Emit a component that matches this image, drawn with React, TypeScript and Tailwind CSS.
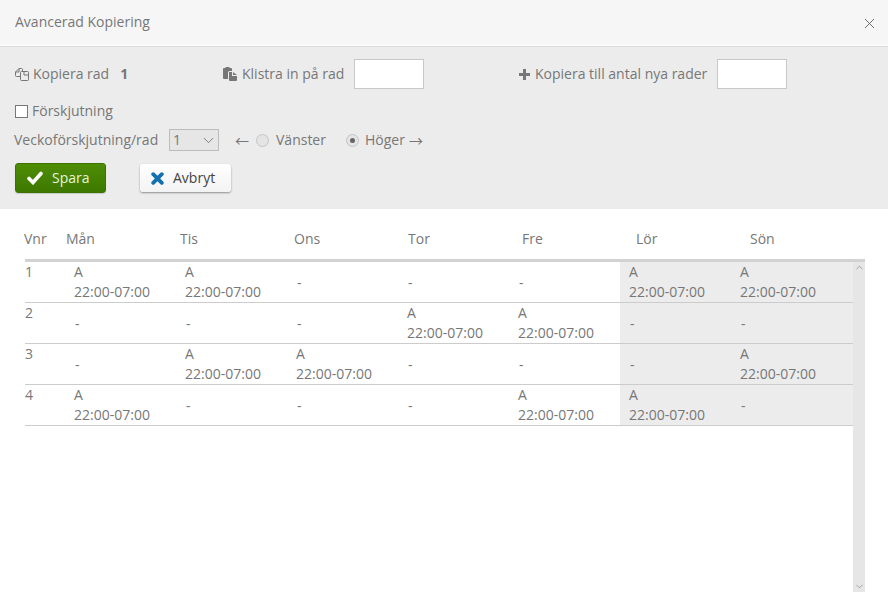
import React from "react";
import { ChevronDown, ChevronUp, X } from "lucide-react";

type Cell = boolean;
const rows: { n: number; cells: Cell[] }[] = [
  { n: 1, cells: [true, true, false, false, false, true, true] },
  { n: 2, cells: [false, false, false, true, true, false, false] },
  { n: 3, cells: [false, true, true, false, false, false, true] },
  { n: 4, cells: [true, false, false, false, true, true, false] },
];
const days = ["Mån", "Tis", "Ons", "Tor", "Fre", "Lör", "Sön"];

function CopyIcon() {
  return (
    <svg width="14" height="14" viewBox="0 0 14 14" fill="none" stroke="#777" strokeWidth="1" className="shrink-0">
      <path d="M5 9.5H1.5a1 1 0 0 1-1-1V5L4 1.5h2.5a1 1 0 0 1 1 1V4" />
      <path d="M4 1.5V5H.5" />
      <path d="M5.5 5.5a1 1 0 0 1 1-1h6a1 1 0 0 1 1 1v7a1 1 0 0 1-1 1h-6a1 1 0 0 1-1-1z" />
      <path d="M9 4.5V8h4.5" />
    </svg>
  );
}

function PasteIcon() {
  return (
    <svg width="14" height="14" viewBox="0 0 14 14" fill="#777" className="shrink-0">
      <path d="M1 1h7a1 1 0 0 1 1 1v2H6.5A1.5 1.5 0 0 0 5 5.5V12H1a1 1 0 0 1-1-1V2a1 1 0 0 1 1-1z" />
      <path d="M2.5 0h4v2h-4z" />
      <path d="M6 5h3v4h5v4a1 1 0 0 1-1 1H7a1 1 0 0 1-1-1z" />
      <path d="M10 5l4 3h-4z" />
    </svg>
  );
}

function PlusIcon() {
  return (
    <svg width="11" height="11" viewBox="0 0 11 11" fill="#777" className="shrink-0">
      <path d="M4 0h3v4h4v3H7v4H4V7H0V4h4z" />
    </svg>
  );
}

function CheckBold() {
  return (
    <svg width="16" height="14" viewBox="0 0 16 14" fill="none" stroke="#fff" strokeWidth="3.6" strokeLinecap="round" strokeLinejoin="miter" className="shrink-0">
      <path d="M2 7.5 6 11.5 14 2.5" />
    </svg>
  );
}

function XBold() {
  return (
    <svg width="13" height="13" viewBox="0 0 13 13" fill="none" stroke="#1471ad" strokeWidth="3.8" strokeLinecap="round" className="shrink-0">
      <path d="M2.2 2.2l8.6 8.6M10.8 2.2l-8.6 8.6" />
    </svg>
  );
}

function Radio({ on }: { on?: boolean }) {
  return (
    <span className="flex h-[13px] w-[13px] items-center justify-center rounded-full border border-[#c4c4c4] bg-[#e4e4e4]">
      {on && <span className="h-[5px] w-[5px] rounded-full bg-[#666]" />}
    </span>
  );
}

function TextBox() {
  return <div className="h-[30px] w-[70px] border border-[#c8c8c8] bg-white" />;
}

export default function App() {
  return (
    <div className="flex h-[600px] w-[888px] flex-col overflow-hidden bg-white font-['Open_Sans',sans-serif] text-[14px] leading-[20px] text-[#777]">
      <header className="flex h-[47px] shrink-0 justify-between border-b border-[#dcdcdc] bg-[#f6f6f6] pl-[15px] pr-[10px] shadow-[inset_0_-2px_0_#fafafa]">
        <span className="mt-[12px]">Avancerad Kopiering</span>
        <X size={17} strokeWidth={1.2} color="#555" className="mt-[15px]" />
      </header>

      <section className="flex h-[162px] shrink-0 flex-col bg-[#ececec] pl-[15px]">
        <div className="mt-[12px] flex h-[30px] items-center">
          <div className="flex w-[208px] items-center gap-[4px]">
            <CopyIcon />
            <span>Kopiera rad</span>
            <b className="ml-[7px] font-bold">1</b>
          </div>
          <div className="flex w-[296px] items-center">
            <PasteIcon />
            <span className="ml-[5px] mr-[10px]">Klistra in på rad</span>
            <TextBox />
          </div>
          <div className="flex items-center">
            <PlusIcon />
            <span className="ml-[5px] mr-[10px]">Kopiera till antal nya rader</span>
            <TextBox />
          </div>
        </div>
        <div className="mt-[12px] flex h-[20px] items-center gap-[4px]">
          <span className="h-[13px] w-[13px] border border-[#777] bg-white" />
          <span>Förskjutning</span>
        </div>
        <div className="-ml-[1px] mt-[8px] flex h-[22px] items-center">
          <span className="w-[155px]">Veckoförskjutning/rad</span>
          <div className="flex h-[22px] w-[50px] items-center justify-between border border-[#bcbcbc] bg-[#e6e6e6] pl-[3px] pr-[1px]">
            <span>1</span>
            <ChevronDown size={17} strokeWidth={1} color="#555" />
          </div>
          <span className="ml-[16px] mr-[7px] w-[14px] font-['Noto_Sans_CJK_SC',sans-serif]">←</span>
          <Radio />
          <span className="ml-[7px] mr-[20px]">Vänster</span>
          <Radio on />
          <span className="ml-[6px] flex">
            Höger<span className="ml-[4px] font-['Noto_Sans_CJK_SC',sans-serif]">→</span>
          </span>
        </div>
        <div className="mt-[12px] flex items-center">
          <button className="flex h-[30px] w-[91px] items-center rounded-[3px] border border-[#3c7300] bg-gradient-to-b from-[#4f8d05] to-[#3d7800] pl-[11px] text-[#e8f5d8] shadow-[0_1px_1px_rgba(0,0,0,0.15)]">
            <CheckBold />
            <span className="ml-[9px]">Spara</span>
          </button>
          <button className="ml-[34px] flex h-[28px] w-[91px] items-center rounded-[3px] bg-gradient-to-b from-white to-[#f3f3f3] pl-[11px] text-[#444] shadow-[0_1px_2px_rgba(0,0,0,0.4)]">
            <XBold />
            <span className="ml-[9px]">Avbryt</span>
          </button>
        </div>
      </section>

      <section className="flex h-[383px] w-[865px] shrink-0 flex-col pl-[24px]">
        <div className="grid h-[50px] shrink-0 grid-cols-[42px_repeat(7,114px)] items-start pt-[20px]">
          <span>Vnr</span>
          {days.map((d) => (
            <span key={d}>{d}</span>
          ))}
        </div>
        <div className="ml-[1px] flex min-h-0 flex-1 border-t-[3px] border-[#d2d2d2]">
          <div className="flex-1">
            {rows.map((r) => (
              <div key={r.n} className="grid h-[41px] grid-cols-[40px_repeat(6,111px)_122px] border-b border-[#ccc]">
                <span>{r.n}</span>
                {r.cells.map((on, i) => (
                  <div key={i} className={`flex flex-col justify-center pl-[9px] ${i >= 5 ? "bg-[#ececec]" : ""}`}>
                    {on ? (
                      <>
                        <span>A</span>
                        <span>22:00-07:00</span>
                      </>
                    ) : (
                      <span className="pl-[1px] pt-[2px]">-</span>
                    )}
                  </div>
                ))}
              </div>
            ))}
          </div>
          <div className="flex w-[12px] shrink-0 flex-col items-center justify-between bg-[#e6e6e6]">
            <ChevronUp size={11} strokeWidth={1} color="#555" />
            <ChevronDown size={11} strokeWidth={1} color="#555" />
          </div>
        </div>
      </section>
    </div>
  );
}
